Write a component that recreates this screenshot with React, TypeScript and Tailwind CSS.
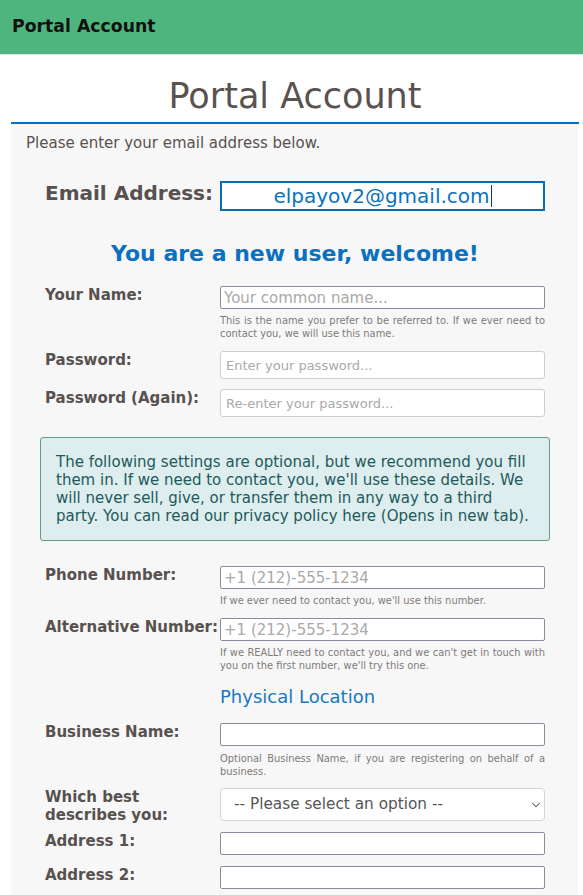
import React from "react";
import { ChevronDown } from "lucide-react";

const labelCls = "w-[175px] shrink-0 font-bold text-[15px] leading-[18px] text-[#57514f]";
const inputCls =
  "w-[325px] h-[23px] border border-[#8e8a9c] rounded-[2px] bg-white px-[3px] text-[15px] text-[#333] placeholder:text-[#a9a9a9] outline-none";
const pwCls =
  "w-[325px] h-[28px] border border-[#cfcfcf] rounded-[3px] bg-white px-[5px] text-[13px] text-[#333] placeholder:text-[#a9a9a9] outline-none";
const helpCls =
  "mt-[5px] font-['DejaVu_Sans_Condensed','DejaVu_Sans',sans-serif] text-[11px] leading-[13px] text-[#7f7a78] text-justify";

function Row({
  label,
  children,
  className = "",
}: {
  label: string;
  children: React.ReactNode;
  className?: string;
}) {
  return (
    <div className={"flex items-start " + className}>
      <div className={labelCls}>{label}</div>
      <div className="w-[325px] flex flex-col">{children}</div>
    </div>
  );
}

export default function App() {
  return (
    <div className="min-h-[895px] bg-white font-['DejaVu_Sans',sans-serif]">
      <header className="h-[55px] bg-[#4fb57f] border-b border-[#e4e4e4] flex items-center pl-[12px]">
        <span className="font-bold text-[17.3px] text-[#111]">Portal Account</span>
      </header>

      <div className="ml-[11px] w-[568px]">
        <h1 className="mt-[20px] mb-[5px] text-center text-[35px] leading-[42px] text-[#5a5250]">
          Portal Account
        </h1>
        <div className="h-[2px] bg-[#0a6fba]" />

        <div className="w-[567px] bg-[#f7f7f7] pt-[10px] pb-[20px]">
          <p className="pl-[15px] text-[15px] leading-[18px] text-[#57514f]">
            Please enter your email address below.
          </p>

          <div className="pl-[34px] pr-[33px]">
            {/* Email */}
            <div className="mt-[29px] flex items-start">
              <div className="w-[175px] shrink-0 font-bold text-[20px] leading-[24px] text-[#57514f]">
                Email Address:
              </div>
              <div className="w-[325px] h-[30px] border-2 border-[#0a6ab2] bg-white flex items-center justify-center text-[20px] text-[#0a72c0]">
                <span>elpayov2@gmail.com</span>
                <span className="inline-block w-[1px] h-[22px] bg-[#1a3550] ml-[1px]" />
              </div>
            </div>

            <h2 className="mt-[30px] text-center font-bold text-[22px] leading-[26px] text-[#0a70c0]">
              You are a new user, welcome!
            </h2>

            <Row label="Your Name:" className="mt-[19px]">
              <input className={inputCls} placeholder="Your common name..." />
              <p className={helpCls}>
                This is the name you prefer to be referred to. If we ever need to contact you, we will use this name.
              </p>
            </Row>

            <Row label="Password:" className="mt-[11px]">
              <input type="password" className={pwCls} placeholder="Enter your password..." />
            </Row>

            <Row label="Password (Again):" className="mt-[10px]">
              <input type="password" className={pwCls} placeholder="Re-enter your password..." />
            </Row>

            <div className="mt-[20px] -mx-[5px] border border-[#5e9e86] rounded-[3px] bg-[#deeded] px-[15px] py-[15px] text-[15px] leading-[18px] text-[#1d5a5c]">
              The following settings are optional, but we recommend you fill them in. If we need to contact you,
              we'll use these details. We will never sell, give, or transfer them in any way to a third party. You
              can read our privacy policy here (Opens in new tab).
            </div>

            <Row label="Phone Number:" className="mt-[25px]">
              <input className={inputCls} placeholder="+1 (212)-555-1234" />
              <p className={helpCls}>If we ever need to contact you, we'll use this number.</p>
            </Row>

            <div className="mt-[11px] flex items-start">
              <div className="w-[175px] shrink-0 whitespace-nowrap font-bold text-[15px] leading-[18px] text-[#57514f]">
                Alternative Number:
              </div>
              <div className="w-[325px] flex flex-col">
                <input className={inputCls} placeholder="+1 (212)-555-1234" />
                <p className={helpCls}>
                  If we REALLY need to contact you, and we can't get in touch with you on the first number, we'll try
                  this one.
                </p>
              </div>
            </div>

            <h3 className="mt-[14px] ml-[175px] text-[18px] leading-[22px] text-[#1a78c2]">Physical Location</h3>

            <Row label="Business Name:" className="mt-[15px]">
              <input className={inputCls} />
              <p className={helpCls + " mt-[6px]"}>
                Optional Business Name, if you are registering on behalf of a business.
              </p>
            </Row>

            <Row label="Which best describes you:" className="mt-[10px]">
              <div className="relative w-[325px] h-[33px]">
                <select className="appearance-none w-full h-full border border-[#d4d4d4] rounded-[4px] bg-white pl-[13px] pr-[30px] text-[15.3px] text-[#555] outline-none">
                  <option>-- Please select an option --</option>
                </select>
                <ChevronDown
                  size={14}
                  strokeWidth={1.8}
                  className="absolute right-[2px] top-[10px] text-[#555] pointer-events-none"
                />
              </div>
            </Row>

            <Row label="Address 1:" className="mt-[8px]">
              <input className={inputCls} />
            </Row>

            <Row label="Address 2:" className="mt-[11px]">
              <input className={inputCls} />
            </Row>
          </div>
        </div>
      </div>
    </div>
  );
}
